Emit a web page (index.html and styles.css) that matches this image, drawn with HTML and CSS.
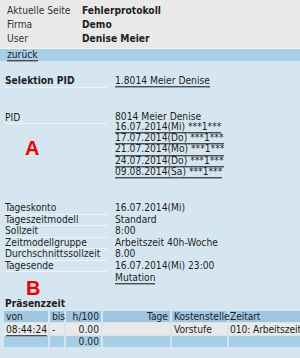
FILE: index.html
```html
<!DOCTYPE html>
<html lang="de">
<head>
    <meta charset="UTF-8">
    <title>Fehlerprotokoll</title>
    <link rel="stylesheet" href="styles.css">
</head>
<body>
    <!-- Kopf -->
    <div class="head">
        <div class="head-row"><span>Aktuelle Seite</span><b>Fehlerprotokoll</b></div>
        <div class="head-row"><span>Firma</span><b>Demo</b></div>
        <div class="head-row"><span>User</span><b>Denise Meier</b></div>
    </div>
    <div class="nav">
        <a href="#" class="link">zurück</a>
    </div>

    <div class="main">
        <div class="row sel">
            <div class="label bold">Selektion PID</div>
            <div class="value"><a href="#" class="link">1.8014 Meier Denise</a></div>
        </div>

        <div class="row pid">
            <div class="label">PID</div>
            <div class="value">
                <div class="pid-name">8014 Meier Denise</div>
                <a href="#" class="link date">16.07.2014(Mi) ***1***</a>
                <a href="#" class="link date">17.07.2014(Do) ***1***</a>
                <a href="#" class="link date">21.07.2014(Mo) ***1***</a>
                <a href="#" class="link date">24.07.2014(Do) ***1***</a>
                <a href="#" class="link date">09.08.2014(Sa) ***1***</a>
            </div>
        </div>

        <div class="info">
            <div class="row"><div class="label">Tageskonto</div><div class="value">16.07.2014(Mi)</div></div>
            <div class="row"><div class="label">Tageszeitmodell</div><div class="value">Standard</div></div>
            <div class="row"><div class="label">Sollzeit</div><div class="value">8:00</div></div>
            <div class="row"><div class="label">Zeitmodellgruppe</div><div class="value">Arbeitszeit 40h-Woche</div></div>
            <div class="row"><div class="label">Durchschnittssollzeit</div><div class="value">8.00</div></div>
            <div class="row"><div class="label">Tagesende</div><div class="value">16.07.2014(Mi) 23:00</div></div>
            <div class="row"><div class="empty"></div><div class="value"><a href="#" class="link">Mutation</a></div></div>
        </div>

        <h3 class="title">Präsenzzeit</h3>
        <table class="grid">
            <tr class="th">
                <td class="c-von">von</td>
                <td class="c-bis">bis</td>
                <td class="c-h num">h/100</td>
                <td class="c-tage num">Tage</td>
                <td class="c-ks">Kostenstelle</td>
                <td class="c-za">Zeitart</td>
            </tr>
            <tr class="td">
                <td><a href="#" class="link">08:44:24</a></td>
                <td>-</td>
                <td class="num">0.00</td>
                <td></td>
                <td>Vorstufe</td>
                <td class="c-za">010: Arbeitszeit</td>
            </tr>
            <tr class="tf">
                <td></td>
                <td></td>
                <td class="num">0.00</td>
                <td></td>
                <td></td>
                <td></td>
            </tr>
        </table>

        <!-- Markierungen -->
        <span class="mark mark-a">A</span>
        <span class="mark mark-b">B</span>
    </div>
</body>
</html>
```

FILE: styles.css
```css
body {
    margin: 0;
    font-family: "DejaVu Sans Condensed", "DejaVu Sans", sans-serif;
    font-size: 10.2px;
    color: #1e1e1e;
    background: #d6e6f1;
    overflow: hidden;
    width: 300px;
}
.head {
    background: #e9e9e9;
    padding: 4px 0 2px 7px;
    border-bottom: 1px solid #f4f4f4;
}
.head-row {
    display: grid;
    grid-template-columns: 75px 1fr;
    height: 14px;
    line-height: 14px;
}
.head-row span {
    color: #333;
}
.nav {
    background: #a7cee7;
    height: 12px;
    line-height: 11px;
    padding-left: 7px;
}
.link {
    color: #1e1e1e;
    text-decoration: none;
    border-bottom: 1px solid #4a4f55;
    box-shadow: 0 1px 0 #98a4ae;
}
.main {
    position: relative;
    padding: 13px 0 0 5px;
}
.row {
    display: grid;
    grid-template-columns: 102px 1fr;
    column-gap: 8px;
    line-height: 11px;
}
.label {
    border-bottom: 1px solid #eef5fa;
    align-self: start;
}
.bold {
    font-weight: bold;
}
.sel {
    line-height: 13px;
}
.pid {
    margin-top: 24px;
}
.pid-name {
    line-height: 10px;
}
.date {
    display: block;
    width: max-content;
    line-height: 10.2px;
}
.info {
    margin-top: 25px;
}
.info .row {
    line-height: 10.5px;
    height: 11.6px;
}
.title {
    margin: 14px 0 0;
    font-size: 10.2px;
    line-height: 12px;
}
.grid {
    border-collapse: separate;
    border-spacing: 2px 1px;
    margin-left: -3px;
    width: 305px;
    table-layout: fixed;
}
.grid td {
    padding: 0 1px 0 2px;
    height: 11px;
    line-height: 11px;
    white-space: nowrap;
}
.grid .num {
    text-align: right;
    padding-right: 2px;
}
.grid .c-za {
    padding-left: 1px;
    letter-spacing: -0.1px;
}
.th td {
    background: #9ec6e2;
}
.td td {
    background: #e9e9e9;
    height: 12px;
}
.tf td {
    background: #a7cee7;
}
.c-von { width: 41px; }
.c-bis { width: 11px; }
.c-h { width: 31px; }
.c-tage { width: 63px; }
.c-ks { width: 52px; }
.mark {
    position: absolute;
    font-family: "Liberation Sans", Arial, sans-serif;
    font-weight: bold;
    font-size: 20px;
    line-height: 20px;
    color: #f00000;
}
.mark-a {
    left: 25px;
    top: 77px;
}
.mark-b {
    left: 26px;
    top: 217px;
}
```
